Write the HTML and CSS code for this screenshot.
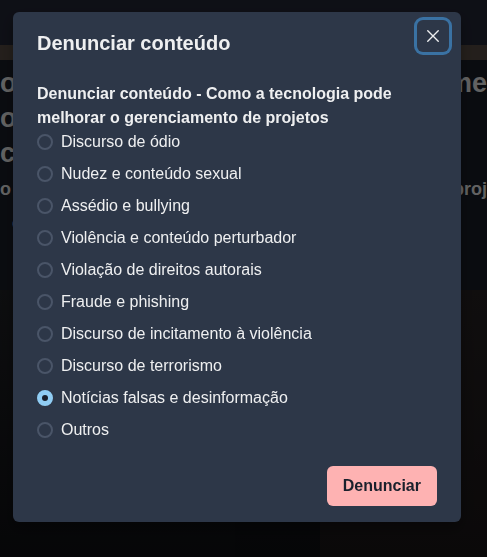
FILE: index.html
```html
<!DOCTYPE html>
<html lang="pt">
<head>
<meta charset="utf-8">
<title>Denunciar conteúdo</title>
<link rel="stylesheet" href="styles.css">
</head>
<body>
<div class="page">
  <div class="topbar"></div>
  <div class="band"></div>
  <div class="hero">
    <div class="hero-row big"><span class="l">o</span><span class="r">me</span></div>
    <div class="hero-row big"><span class="l">oj,</span><span class="r"></span></div>
    <div class="hero-row big"><span class="l">ci</span><span class="r"></span></div>
    <div class="hero-row small"><span class="l">o '</span><span class="r">proj</span></div>
    <div class="hero-row small indent"><span class="l">o</span><span class="r"></span></div>
  </div>
  <div class="media">
    <div class="media-a"></div>
    <div class="media-b"></div>
    <div class="media-c"></div>
  </div>
</div>

<div class="overlay"></div>
<div class="modal-wrap">
  <section class="modal" role="dialog" aria-labelledby="mt">
    <header class="modal-header" id="mt">Denunciar conteúdo</header>
    <button class="close" aria-label="Fechar">
      <svg viewBox="0 0 24 24" width="14" height="14"><path d="M3 3 L21 21 M21 3 L3 21" stroke="currentColor" stroke-width="2.4" stroke-linecap="round" fill="none"/></svg>
    </button>
    <div class="modal-body">
      <p class="question">Denunciar conteúdo - Como a tecnologia pode melhorar o gerenciamento de projetos</p>
      <div class="options">
        <label class="opt"><span class="radio"></span><span>Discurso de ódio</span></label>
        <label class="opt"><span class="radio"></span><span>Nudez e conteúdo sexual</span></label>
        <label class="opt"><span class="radio"></span><span>Assédio e bullying</span></label>
        <label class="opt"><span class="radio"></span><span>Violência e conteúdo perturbador</span></label>
        <label class="opt"><span class="radio"></span><span>Violação de direitos autorais</span></label>
        <label class="opt"><span class="radio"></span><span>Fraude e phishing</span></label>
        <label class="opt"><span class="radio"></span><span>Discurso de incitamento à violência</span></label>
        <label class="opt"><span class="radio"></span><span>Discurso de terrorismo</span></label>
        <label class="opt"><span class="radio checked"></span><span>Notícias falsas e desinformação</span></label>
        <label class="opt"><span class="radio"></span><span>Outros</span></label>
      </div>
    </div>
    <footer class="modal-footer">
      <button class="submit">Denunciar</button>
    </footer>
  </section>
</div>
</body>
</html>
```
FILE: styles.css
```css
* { box-sizing: border-box; }
html, body { margin: 0; height: 100%; }
body {
  background: #161920;
  font-family: "Liberation Sans", Arial, sans-serif;
  overflow: hidden;
}
.page { height: 557px; overflow: hidden; }
.topbar { height: 45px; background: #1c1f2b; }
.band { height: 15px; background: #463d36; }
.hero {
  height: 230px;
  background: #151820;
  padding-top: 8px;
  color: #bdbdbd;
  font-weight: 700;
}
.hero-row { display: flex; justify-content: space-between; }
.hero-row.big { font-size: 27px; height: 35px; }
.hero-row.small { font-size: 18px; height: 28px; margin-top: 6px; }
.hero-row.indent { padding-left: 12px; }
.media { height: 267px; display: flex; background: #111317; }
.media-a { flex: 0 0 235px; background: linear-gradient(180deg, #1a1b1e, #0c0d10); }
.media-b { flex: 0 0 85px; background: linear-gradient(180deg, #16171b, #0b0c0f); }
.media-c { flex: 1; background: linear-gradient(180deg, #1f1b1c, #151213); }

.overlay {
  position: fixed; inset: 0;
  background: rgba(0,0,0,0.48);
}
.modal-wrap {
  position: fixed; inset: 0;
  display: flex; justify-content: center; align-items: flex-start;
  padding: 12px 13px 0 0;
}
.modal {
  position: relative;
  width: 448px;
  background: #2d3748;
  border-radius: 6px;
  color: rgba(255,255,255,0.92);
  box-shadow: 0 7px 14px rgba(0,0,0,0.3);
}
.modal-header {
  padding: 16px 24px;
  font-size: 20px;
  line-height: 30px;
  font-weight: 700;
}
.close {
  position: absolute; top: 8px; right: 12px;
  width: 32px; height: 32px;
  border: 0; border-radius: 6px;
  background: transparent;
  color: rgba(255,255,255,0.92);
  display: flex; align-items: center; justify-content: center;
  box-shadow: 0 0 0 3px rgba(66,153,225,0.6);
  padding: 0;
}
.modal-body { padding: 8px 24px; }
.question {
  margin: 0;
  font-size: 16px;
  line-height: 24px;
  font-weight: 700;
}
.options { display: flex; flex-direction: column; gap: 8px; }
.opt {
  display: flex; align-items: center; gap: 8px;
  font-size: 16px; line-height: 24px;
}
.radio {
  width: 16px; height: 16px; flex: 0 0 16px;
  border-radius: 50%;
  border: 2px solid #4a5568;
  display: flex; align-items: center; justify-content: center;
}
.radio.checked { background: #90cdf4; border-color: #90cdf4; }
.radio.checked::after {
  content: ""; width: 6px; height: 6px; border-radius: 50%; background: #1a202c;
}
.modal-footer {
  padding: 16px 24px;
  display: flex; justify-content: flex-end;
}
.submit {
  height: 40px;
  padding: 0 16px;
  border: 0; border-radius: 6px;
  background: #feb2b2;
  color: #1a202c;
  font-family: "Liberation Sans", Arial, sans-serif;
  font-size: 16px; font-weight: 700;
}
```
